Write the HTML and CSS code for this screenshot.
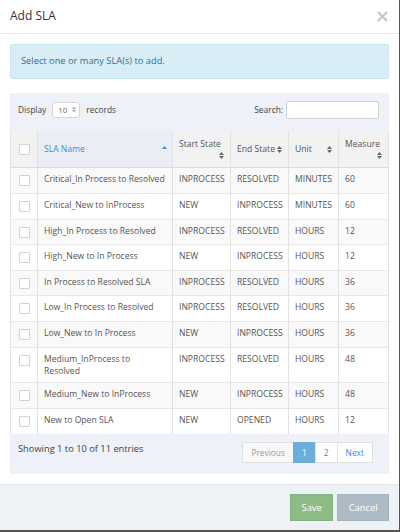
FILE: index.html
```html
<!DOCTYPE html>
<html lang="en">
<head>
  <meta charset="UTF-8">
  <meta name="viewport" content="width=device-width, initial-scale=1.0">
  <title>Add SLA</title>
  <link rel="stylesheet" href="styles.css">
</head>
<body>
  <div class="modal">
    <div class="modal-header">
      <h4 class="modal-title">Add SLA</h4>
      <span class="close">
        <svg width="11" height="11" viewBox="0 0 11 11"><path d="M1 1L10 10M10 1L1 10" stroke="#c4c4c4" stroke-width="2"/></svg>
      </span>
    </div>

    <div class="modal-body">
      <div class="alert-info">Select one or many SLA(s) to add.</div>

      <div class="dt-wrapper">
        <div class="dt-top">
          <div class="dt-length">
            Display
            <span class="select-box">10
              <svg width="4" height="7" viewBox="0 0 4 7"><path d="M0 3L2 0.5L4 3Z M0 4L4 4L2 6.5Z" fill="#aaa"/></svg>
            </span>
            records
          </div>
          <div class="dt-filter">
            Search:
            <span class="search-input"></span>
          </div>
        </div>

        <table class="sla-table">
          <thead>
            <tr>
              <th class="col-check"><span class="checkbox"></span></th>
              <th class="col-name sorted">
                <div class="th-inner"><span>SLA Name</span>
                  <svg class="sort-icon" width="5" height="7" viewBox="0 0 5 7"><path d="M0 3L2.5 0L5 3Z" fill="#3b8ed8"/></svg>
                </div>
              </th>
              <th class="col-start stack">
                <div class="th-inner"><span>Start State</span>
                  <svg class="sort-icon" width="5" height="7" viewBox="0 0 5 7"><path d="M0 3L2.5 0L5 3Z M0 4L5 4L2.5 7Z" fill="#666"/></svg>
                </div>
              </th>
              <th class="col-end">
                <div class="th-inner"><span>End State</span>
                  <svg class="sort-icon" width="5" height="7" viewBox="0 0 5 7"><path d="M0 3L2.5 0L5 3Z M0 4L5 4L2.5 7Z" fill="#666"/></svg>
                </div>
              </th>
              <th class="col-unit">
                <div class="th-inner"><span>Unit</span>
                  <svg class="sort-icon" width="5" height="7" viewBox="0 0 5 7"><path d="M0 3L2.5 0L5 3Z M0 4L5 4L2.5 7Z" fill="#666"/></svg>
                </div>
              </th>
              <th class="col-measure stack">
                <div class="th-inner"><span>Measure</span>
                  <svg class="sort-icon" width="5" height="7" viewBox="0 0 5 7"><path d="M0 3L2.5 0L5 3Z M0 4L5 4L2.5 7Z" fill="#666"/></svg>
                </div>
              </th>
            </tr>
          </thead>
          <tbody>
            <tr><td class="col-check"><span class="checkbox"></span></td><td>Critical_In Process to Resolved</td><td>INPROCESS</td><td>RESOLVED</td><td>MINUTES</td><td>60</td></tr>
            <tr><td class="col-check"><span class="checkbox"></span></td><td>Critical_New to InProcess</td><td>NEW</td><td>INPROCESS</td><td>MINUTES</td><td>60</td></tr>
            <tr><td class="col-check"><span class="checkbox"></span></td><td>High_In Process to Resolved</td><td>INPROCESS</td><td>RESOLVED</td><td>HOURS</td><td>12</td></tr>
            <tr><td class="col-check"><span class="checkbox"></span></td><td>High_New to In Process</td><td>NEW</td><td>INPROCESS</td><td>HOURS</td><td>12</td></tr>
            <tr><td class="col-check"><span class="checkbox"></span></td><td>In Process to Resolved SLA</td><td>INPROCESS</td><td>RESOLVED</td><td>HOURS</td><td>36</td></tr>
            <tr><td class="col-check"><span class="checkbox"></span></td><td>Low_In Process to Resolved</td><td>INPROCESS</td><td>RESOLVED</td><td>HOURS</td><td>36</td></tr>
            <tr><td class="col-check"><span class="checkbox"></span></td><td>Low_New to In Process</td><td>NEW</td><td>INPROCESS</td><td>HOURS</td><td>36</td></tr>
            <tr><td class="col-check"><span class="checkbox"></span></td><td>Medium_InProcess to Resolved</td><td>INPROCESS</td><td>RESOLVED</td><td>HOURS</td><td>48</td></tr>
            <tr><td class="col-check"><span class="checkbox"></span></td><td>Medium_New to InProcess</td><td>NEW</td><td>INPROCESS</td><td>HOURS</td><td>48</td></tr>
            <tr><td class="col-check"><span class="checkbox"></span></td><td>New to Open SLA</td><td>NEW</td><td>OPENED</td><td>HOURS</td><td>12</td></tr>
          </tbody>
        </table>

        <div class="dt-bottom">
          <div class="dt-info">Showing 1 to 10 of 11 entries</div>
          <ul class="pagination">
            <li class="disabled"><a href="#">Previous</a></li>
            <li class="active"><a href="#">1</a></li>
            <li><a href="#">2</a></li>
            <li><a href="#">Next</a></li>
          </ul>
        </div>
      </div>
    </div>

    <div class="modal-footer">
      <button class="btn btn-save">Save</button>
      <button class="btn btn-cancel">Cancel</button>
    </div>
  </div>
</body>
</html>
```

FILE: styles.css
```css
body {
  margin: 0;
  padding: 0;
  background-color: #555;
  font-family: "Open Sans", sans-serif;
  font-size: 8.6px;
  line-height: 12.4px;
  color: #555;
}

.modal {
  width: 399px;
  height: 530px;
  background-color: #fff;
  display: flex;
  flex-direction: column;
}

.modal-header {
  height: 34px;
  border-bottom: 1px solid #e7e7e7;
  padding: 0 10px;
  display: flex;
  align-items: center;
  justify-content: space-between;
}

.modal-title {
  margin: 0;
  font-size: 12px;
  font-weight: normal;
  color: #333;
}

.close {
  display: flex;
  margin-right: 1px;
}

.modal-body {
  padding: 10px;
}

.alert-info {
  height: 33px;
  display: flex;
  align-items: center;
  padding: 0 10px;
  margin-bottom: 14px;
  background-color: #d9edf7;
  border: 1px solid #c6e6f1;
  border-radius: 2px;
  color: #31708f;
  font-size: 9.3px;
}

.dt-wrapper {
  background-color: #eef1f7;
}

.dt-top {
  display: flex;
  justify-content: space-between;
  align-items: center;
  padding: 8px 10px 12px 8px;
  font-size: 8.4px;
  color: #444;
}

.dt-length,
.dt-filter {
  display: flex;
  align-items: center;
}

.select-box {
  display: flex;
  align-items: center;
  justify-content: space-between;
  box-sizing: border-box;
  width: 28px;
  height: 16px;
  margin: 0 6px;
  padding: 0 3px 0 5px;
  background-color: #fff;
  border: 1px solid #d5d5d5;
  border-radius: 3px;
  font-size: 8px;
  color: #666;
}

.search-input {
  display: block;
  box-sizing: border-box;
  width: 93px;
  height: 18px;
  margin-left: 3px;
  background-color: #fff;
  border: 1px solid #d0d0d0;
  border-radius: 2px;
}

.sla-table {
  width: 100%;
  border-collapse: collapse;
  background-color: #fff;
  table-layout: fixed;
}

.sla-table th,
.sla-table td {
  box-sizing: border-box;
  border-left: 1px solid #e2e2e2;
  border-right: 1px solid #e2e2e2;
  padding: 5px 6px;
  text-align: left;
}

.sla-table th {
  padding: 7px 6px;
  background-color: #f2f2f2;
  font-weight: normal;
  vertical-align: middle;
  border-bottom: 1px solid #dcdcdc;
}

.sla-table th.sorted {
  background-color: #eaeef4;
  color: #3b8ed8;
  padding-right: 5px;
}

.sla-table td {
  vertical-align: top;
}

.sla-table tbody tr {
  height: 25.6px;
  border-top: 1px solid #e8e8e8;
}

.sla-table tbody tr:nth-child(odd) {
  background-color: #f9f9f9;
}

.col-check { width: 27px; }
.col-name { width: 135px; }
.col-start { width: 58px; }
.col-end { width: 58px; }
.col-unit { width: 50px; }

.sla-table .col-check {
  padding: 0;
  text-align: center;
}

.sla-table td.col-check {
  padding-top: 7px;
}

.checkbox {
  display: block;
  width: 11px;
  height: 11px;
  margin: 0 auto;
  box-sizing: border-box;
  background-color: #fff;
  border: 1px solid #d2d2d2;
  border-radius: 1px;
}

.th-inner {
  display: flex;
  align-items: center;
  justify-content: space-between;
}

.stack .th-inner {
  flex-direction: column;
  align-items: stretch;
}

.stack .sort-icon {
  align-self: flex-end;
  margin-top: 2px;
  margin-bottom: 1px;
}

.sort-icon {
  flex-shrink: 0;
}

.dt-bottom {
  display: flex;
  justify-content: space-between;
  align-items: flex-start;
  padding: 8px 16px 11px 8px;
}

.dt-info {
  font-size: 9.3px;
  color: #444;
  margin-top: 1px;
}

.pagination {
  display: flex;
  list-style: none;
  margin: 0;
  padding: 0;
}

.pagination a {
  display: block;
  height: 19px;
  line-height: 19px;
  padding: 0 8px;
  margin-left: -1px;
  border: 1px solid #e0e0e0;
  background-color: #fff;
  color: #3b8ed8;
  text-decoration: none;
  font-size: 8.4px;
}

.pagination .disabled a {
  background-color: #f8f8f8;
  color: #999;
}

.pagination .active a {
  background-color: #6cadd9;
  border-color: #6cadd9;
  color: #fff;
}

.modal-footer {
  margin-top: auto;
  display: flex;
  justify-content: flex-end;
  gap: 4px;
  padding: 9px 10px;
  background-color: #eef1f6;
  border-top: 1px solid #e4e7ec;
}

.btn {
  height: 27px;
  padding: 0 10.5px;
  border: 1px solid transparent;
  font-family: "Open Sans", sans-serif;
  font-size: 9.3px;
  color: #fff;
  cursor: pointer;
}

.btn-save {
  background-color: #8cbb85;
  border-color: #84b47d;
}

.btn-cancel {
  background-color: #adbcc4;
  border-color: #a5b4bc;
}
```
